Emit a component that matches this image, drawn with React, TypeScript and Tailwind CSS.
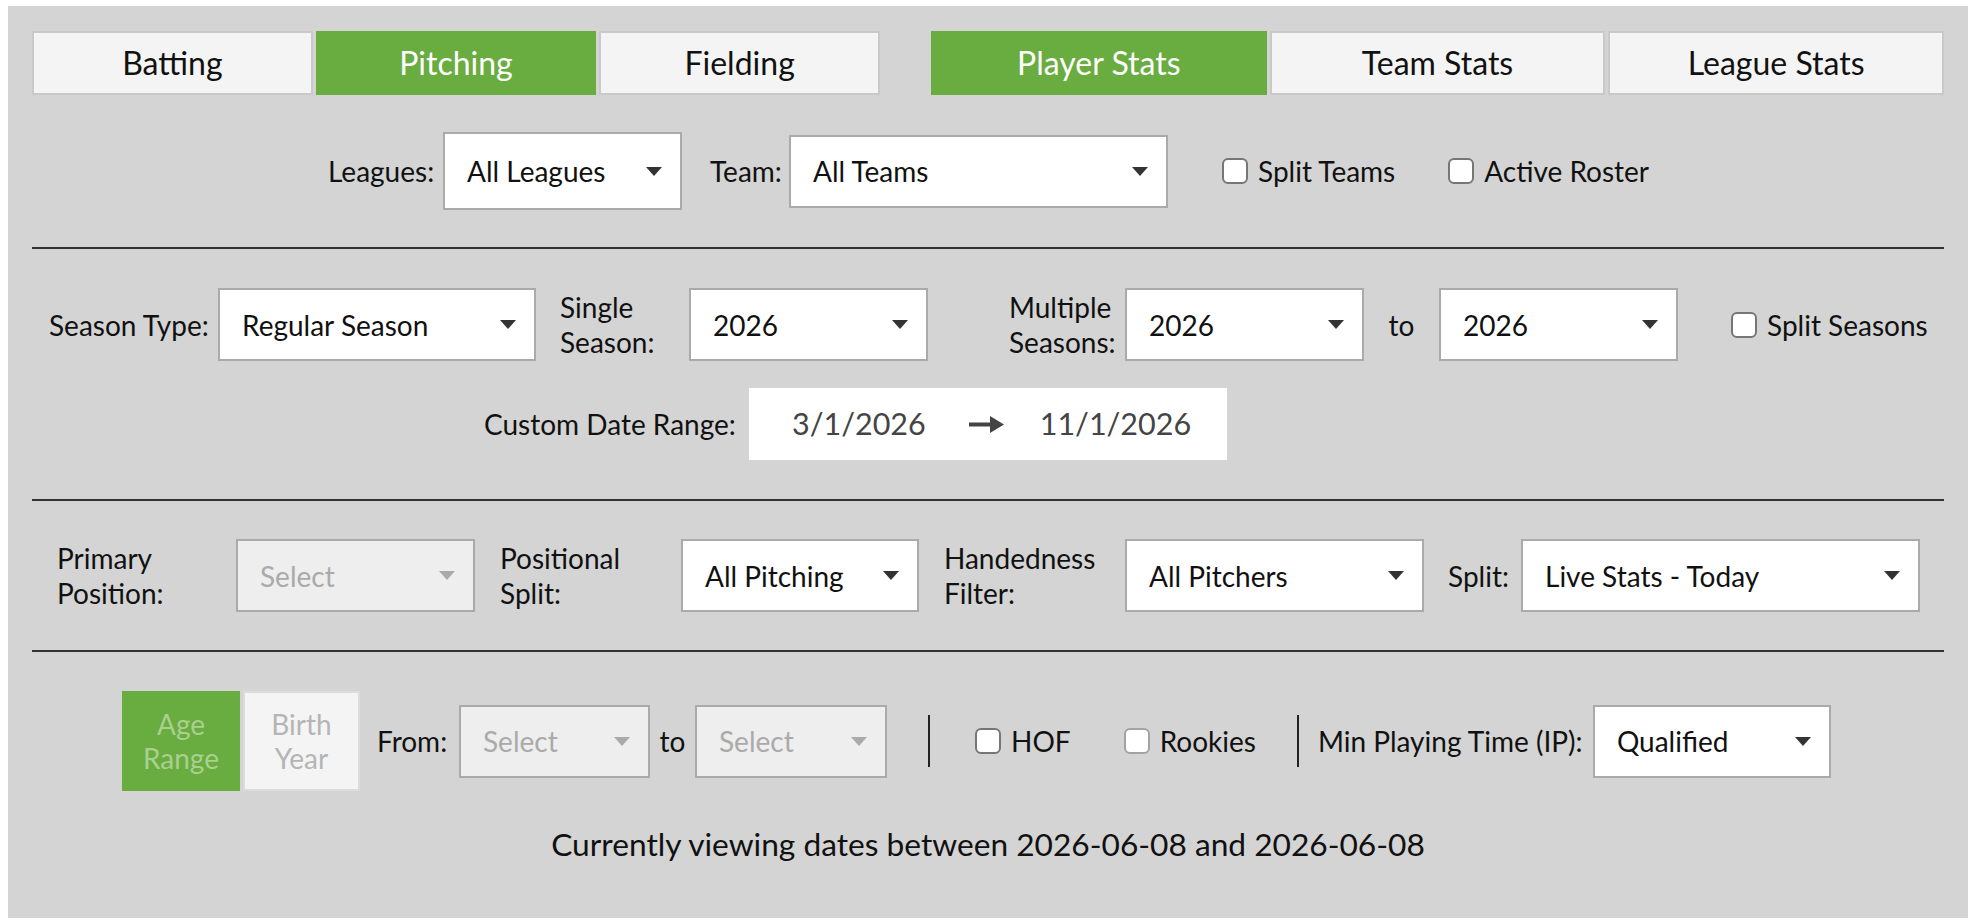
import React from "react";

function Caret({ muted }: { muted?: boolean }) {
  return (
    <svg width="16" height="9" viewBox="0 0 16 9" className="shrink-0">
      <polygon points="0,0 16,0 8,9" fill={muted ? "#aaaaaa" : "#333333"} />
    </svg>
  );
}

function Select({
  value,
  w,
  h = "h-[73px]",
  disabled,
}: {
  value: string;
  w: string;
  h?: string;
  disabled?: boolean;
}) {
  return (
    <div
      className={`${w} ${h} shrink-0 flex items-center justify-between pl-[22px] pr-[18px] border-2 border-[#aaaaaa] ${
        disabled ? "bg-[#eeeeee] text-[#aaaaaa]" : "bg-white text-[#111]"
      }`}
    >
      <span className="whitespace-nowrap">{value}</span>
      <Caret muted={disabled} />
    </div>
  );
}

function Check({ label, light }: { label: string; light?: boolean }) {
  return (
    <div className="flex items-center gap-[10px] whitespace-nowrap">
      <span
        className={`w-[26px] h-[26px] rounded-[6px] border-2 bg-white ${
          light ? "border-[#a3a3a3]" : "border-[#767676]"
        }`}
      />
      <span>{label}</span>
    </div>
  );
}

function Tab({ label, active }: { label: string; active?: boolean }) {
  return (
    <div
      className={`h-[64px] flex items-center justify-center text-[32px] border-2 ${
        active
          ? "bg-[#69ac40] border-[#69ac40] text-white"
          : "bg-[#f4f4f4] border-[#c9c9c9] text-[#111]"
      }`}
    >
      {label}
    </div>
  );
}

const Divider = () => <div className="h-[2px] bg-[#333]" />;

export default function App() {
  return (
    <div className="w-[1986px] h-[922px] bg-white pl-[8px] pt-[6px] font-['Lato',sans-serif] text-[28px] text-[#111]">
      <div className="w-[1960px] h-[912px] bg-[#d4d4d4] px-[24px]">
        {/* stat type tabs */}
        <div className="pt-[25px] flex gap-[51px]">
          <div className="w-[848px] grid grid-cols-3 gap-[3px]">
            <Tab label="Batting" />
            <Tab label="Pitching" active />
            <Tab label="Fielding" />
          </div>
          <div className="flex-1 grid grid-cols-3 gap-[3px]">
            <Tab label="Player Stats" active />
            <Tab label="Team Stats" />
            <Tab label="League Stats" />
          </div>
        </div>

        {/* leagues / team */}
        <div className="h-[152px] flex items-center">
          <span className="ml-[296px] w-[115px] shrink-0">Leagues:</span>
          <Select value="All Leagues" w="w-[239px]" h="h-[78px]" />
          <span className="ml-[28px] w-[79px] shrink-0">Team:</span>
          <Select value="All Teams" w="w-[379px]" />
          <div className="ml-[54px]">
            <Check label="Split Teams" />
          </div>
          <div className="ml-[53px]">
            <Check label="Active Roster" />
          </div>
        </div>

        <Divider />

        {/* seasons */}
        <div className="pt-[39px] pb-[39px]">
          <div className="h-[73px] flex items-center">
            <span className="ml-[17px] w-[169px] shrink-0">Season Type:</span>
            <Select value="Regular Season" w="w-[318px]" />
            <span className="ml-[24px] w-[129px] shrink-0 leading-[35px]">
              Single
              <br />
              Season:
            </span>
            <Select value="2026" w="w-[239px]" />
            <span className="ml-[81px] w-[116px] shrink-0 leading-[35px]">
              Multiple
              <br />
              Seasons:
            </span>
            <Select value="2026" w="w-[239px]" />
            <span className="w-[75px] shrink-0 text-center">to</span>
            <Select value="2026" w="w-[239px]" />
            <div className="ml-[53px]">
              <Check label="Split Seasons" />
            </div>
          </div>
          <div className="mt-[27px] h-[72px] flex items-center">
            <span className="ml-[452px] w-[265px] shrink-0">Custom Date Range:</span>
            <div className="w-[478px] h-[72px] bg-white flex items-center pl-[43px] text-[30.5px] text-[#444]">
              <span>3/1/2026</span>
              <svg width="35" height="17" viewBox="0 0 35 17" className="ml-[43px] mr-[36px]">
                <rect x="0" y="6.5" width="24" height="4" fill="#444" />
                <polygon points="21,0 35,8.5 21,17" fill="#444" />
              </svg>
              <span>11/1/2026</span>
            </div>
          </div>
        </div>

        <Divider />

        {/* positions / splits */}
        <div className="h-[149px] flex items-center">
          <span className="ml-[25px] w-[179px] shrink-0 leading-[35px]">
            Primary
            <br />
            Position:
          </span>
          <Select value="Select" w="w-[239px]" disabled />
          <span className="ml-[25px] w-[181px] shrink-0 leading-[35px]">
            Positional
            <br />
            Split:
          </span>
          <Select value="All Pitching" w="w-[238px]" />
          <span className="ml-[25px] w-[181px] shrink-0 leading-[35px]">
            Handedness
            <br />
            Filter:
          </span>
          <Select value="All Pitchers" w="w-[299px]" />
          <span className="ml-[24px] w-[73px] shrink-0 whitespace-nowrap">Split:</span>
          <Select value="Live Stats - Today" w="w-[399px]" />
        </div>

        <Divider />

        {/* age / extras */}
        <div className="pt-[39px]">
          <div className="h-[100px] flex items-center">
            <div className="ml-[90px] h-[100px] flex gap-[3px] shrink-0 leading-[34px]">
              <div className="w-[118px] bg-[#69ac40] text-[#a9d08f] flex items-center justify-center text-center">
                Age
                <br />
                Range
              </div>
              <div className="w-[117px] bg-[#f4f4f4] border-2 border-[#dcdcdc] text-[#b5b5b5] flex items-center justify-center text-center">
                Birth
                <br />
                Year
              </div>
            </div>
            <span className="ml-[17px] w-[82px] shrink-0">From:</span>
            <Select value="Select" w="w-[191px]" disabled />
            <span className="w-[45px] shrink-0 text-center">to</span>
            <Select value="Select" w="w-[192px]" disabled />
            <div className="ml-[41px] w-[2px] h-[52px] bg-[#222] shrink-0" />
            <div className="ml-[45px]">
              <Check label="HOF" />
            </div>
            <div className="ml-[53px]">
              <Check label="Rookies" light />
            </div>
            <div className="ml-[41px] w-[2px] h-[52px] bg-[#222] shrink-0" />
            <span className="ml-[19px] w-[275px] shrink-0 whitespace-nowrap">Min Playing Time (IP):</span>
            <Select value="Qualified" w="w-[238px]" />
          </div>
        </div>

        <div className="h-[108px] flex items-center justify-center text-[31.7px]">
          Currently viewing dates between 2026-06-08 and 2026-06-08
        </div>
      </div>
    </div>
  );
}
